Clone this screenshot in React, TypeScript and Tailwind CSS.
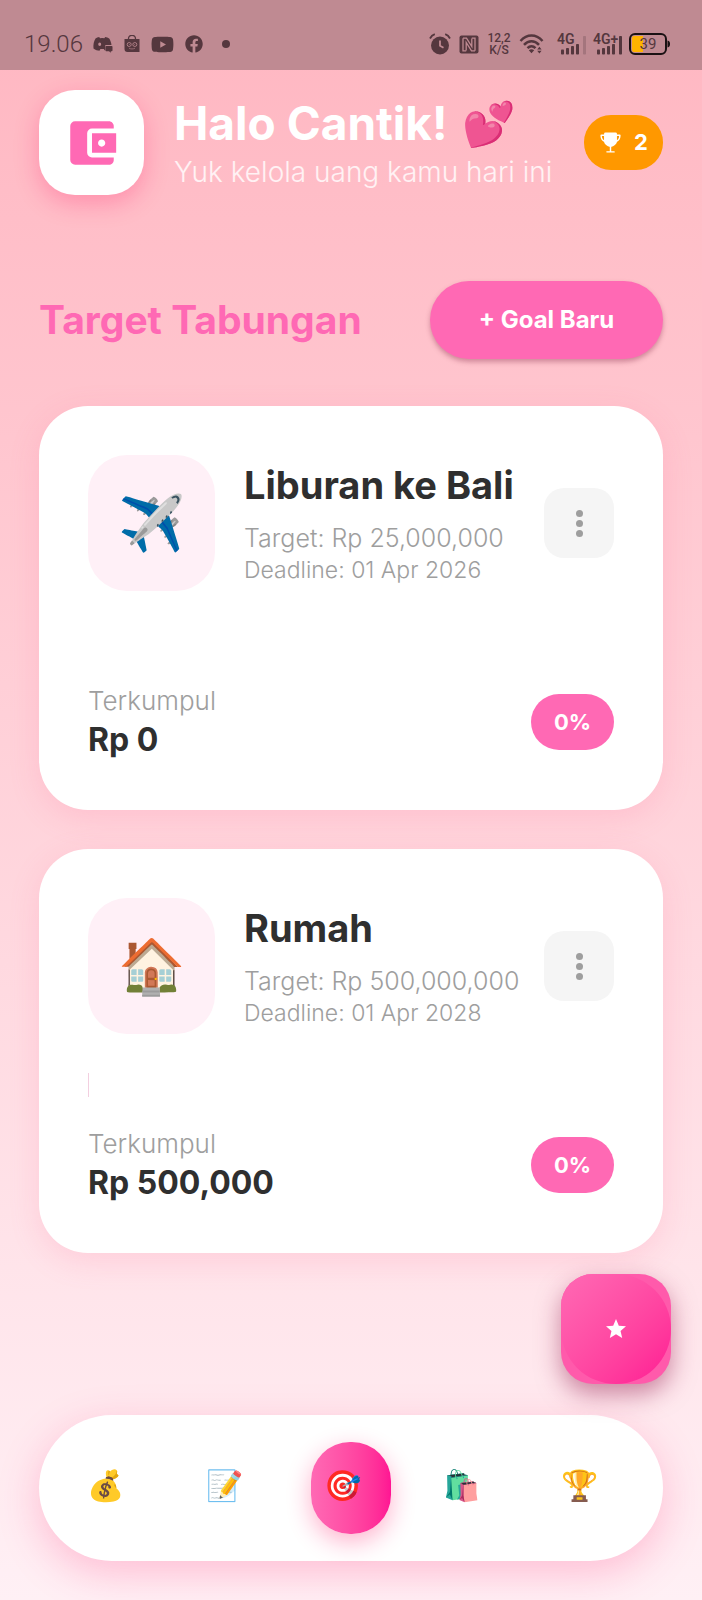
import { MdAccountBalanceWallet, MdStar } from "react-icons/md";
import { IoTrophy } from "react-icons/io5";
import { FaFacebook, FaYoutube } from "react-icons/fa";

type Goal = {
  emoji: string;
  name: string;
  target: string;
  deadline: string;
  saved: string;
  percent: string;
  started: boolean;
};

const goals: Goal[] = [
  {
    emoji: "✈️",
    name: "Liburan ke Bali",
    target: "Rp 25,000,000",
    deadline: "01 Apr 2026",
    saved: "Rp 0",
    percent: "0%",
    started: false,
  },
  {
    emoji: "🏠",
    name: "Rumah",
    target: "Rp 500,000,000",
    deadline: "01 Apr 2028",
    saved: "Rp 500,000",
    percent: "0%",
    started: true,
  },
];

const tabs = [
  { emoji: "💰", label: "Keuangan", active: false },
  { emoji: "📝", label: "Catatan", active: false },
  { emoji: "🎯", label: "Target", active: true },
  { emoji: "🛍️", label: "Belanja", active: false },
  { emoji: "🏆", label: "Pencapaian", active: false },
];

function ChatIcon() {
  return (
    <svg viewBox="0 0 20 17" className="h-[17px] w-5" fill="currentColor" aria-hidden="true">
      <path
        fillRule="evenodd"
        d="M6.2 1 7 2.2a13 13 0 0 1 4.4 0L12.2 1c1.500.2 2.800.7 4 1.500 1.300 2 2 4.200 2.300 6.500h-6.200v5.200h-.8l-.6-1.200c-1.100.1-2.400.1-3.500 0l-.9 1.800C4.500 14.600 2.500 14 .5 12.500.1 8.700.8 5.300 2.500 2.500 3.600 1.700 4.800 1.200 6.200 1Zm.5 5.600a1.500 1.700 0 1 0 0 3.400 1.500 1.700 0 0 0 0-3.400Z"
      />
      <path d="M13.500 10h5c.6 0 1 .4 1 1v3.200c0 .6-.4 1-1 1h-.7v1.500l-1.800-1.500h-2.500c-.6 0-1-.4-1-1V11c0-.6.4-1 1-1Z" />
    </svg>
  );
}

function ShopIcon() {
  return (
    <svg viewBox="0 0 16 18" className="h-[18px] w-4" fill="none" aria-hidden="true">
      <path d="M4.500 5V3.800a3.500 3.500 0 0 1 7 0V5" stroke="currentColor" strokeWidth="1.300" />
      <path d="M.5 4h15v13H3.500a3 3 0 0 1-3-3V4Z" fill="currentColor" />
      <circle cx="5.200" cy="9.500" r="2" stroke="#bf8a92" strokeWidth=".8" />
      <circle cx="10.800" cy="9.500" r="2" stroke="#bf8a92" strokeWidth=".8" />
      <path d="M5 13.200c2 1 4 1 6 0M5.200 9.500h.8M10 9.500h.8" stroke="#bf8a92" strokeWidth=".6" />
    </svg>
  );
}

function AlarmIcon() {
  return (
    <svg viewBox="0 0 22 22" className="size-[22px]" fill="none" aria-hidden="true">
      <circle cx="11" cy="12.500" r="9" fill="currentColor" />
      <path d="M1 5.500C2 3.500 3.500 2 5.800 1.200M21 5.500c-1-2-2.500-3.500-4.800-4.300" stroke="currentColor" strokeWidth="1.800" />
      <path d="M11 7.500v5.200l3.500 2" stroke="#bf8a92" strokeWidth="1.800" />
    </svg>
  );
}

function NfcIcon() {
  return (
    <svg viewBox="0 0 20 19" className="h-[19px] w-5" fill="none" aria-hidden="true">
      <rect x=".5" y=".5" width="19" height="18" rx="2" fill="currentColor" />
      <path d="M4 3.200h3.500l5.300 8.300V3.500M16 15.800h-3.500L7.200 7.500v8" stroke="#bf8a92" strokeWidth="1.300" />
      <path d="M4 3.200v12.600h3.200M16 15.800V3.200h-3.200" stroke="#bf8a92" strokeWidth="1.300" />
    </svg>
  );
}

function WifiIcon() {
  return (
    <svg viewBox="0 0 26 20" className="h-5 w-[26px]" fill="none" aria-hidden="true">
      <path d="M1.500 7C8-.2 17-.2 23.500 7M5 10.800c4.500-4.800 10.500-4.800 15 0M8.500 14.200c2.500-2.600 5.500-2.600 8 0" stroke="currentColor" strokeWidth="2.500" />
      <path d="m9.800 16.200 2.700 3 2.700-3c-1.700-1.200-3.700-1.200-5.400 0ZM18.200 15.500l2.200-2.700 2.200 2.700h-4.400ZM18.200 16.800l2.200 2.700 2.200-2.700h-4.400Z" fill="currentColor" />
    </svg>
  );
}

function SignalIcon({ label, full }: { label: string; full: boolean }) {
  return (
    <div className="grid h-[26px] w-[31px] grid-cols-1 grid-rows-1">
      <span className="col-start-1 row-start-1 text-[14px] leading-4 font-semibold">{label}</span>
      <svg viewBox="0 0 31 26" className="col-start-1 row-start-1 h-[26px] w-[31px]" fill="currentColor" aria-hidden="true">
        <rect x="4" y="18.500" width="3" height="5" rx=".8" />
        <rect x="9" y="17" width="3" height="6.500" rx=".8" />
        <rect x="14" y="15" width="3" height="8.500" rx=".8" />
        <rect x="19" y="13" width="3" height="10.500" rx=".8" />
        <rect x="26" y="5" width="3" height="18.500" rx=".8" opacity={full ? 1 : 0.25} />
      </svg>
    </div>
  );
}

function BatteryIcon() {
  return (
    <svg viewBox="0 0 42 22" className="h-[22px] w-[42px]" aria-hidden="true">
      <rect x="1" y="1" width="36" height="20" rx="5" fill="none" stroke="#1a1113" strokeWidth="2" />
      <path d="M5 3h9v16H5a2 2 0 0 1-2-2V5a2 2 0 0 1 2-2Z" fill="#ffb300" />
      <path d="M38.500 7.500c2 .5 2.500 1.500 2.500 3.500s-.5 3-2.500 3.500Z" fill="#1a1113" />
      <text x="19" y="16" textAnchor="middle" className="font-['Roboto'] text-[15px]" fill="#55373e">
        39
      </text>
    </svg>
  );
}

function StatusBar() {
  return (
    <div className="flex h-[70px] items-end justify-between bg-[#bf8a92] pr-[31px] pb-[15px] pl-6 text-[#55373e]">
      <div className="flex h-[22px] items-center font-['Roboto',sans-serif]">
        <span className="text-2xl font-light">19.06</span>
        <div className="ml-[10px] flex items-center gap-[11px]">
          <ChatIcon />
          <ShopIcon />
          <FaYoutube className="size-[23px]" />
          <FaFacebook className="size-[18px]" />
          <span className="ml-2 size-2 rounded-full bg-current" />
        </div>
      </div>
      <div className="flex h-[22px] items-center gap-2 font-['Roboto',sans-serif]">
        <AlarmIcon />
        <NfcIcon />
        <div className="w-6 text-center text-xs leading-3 font-medium">
          12,2
          <br />
          K/S
        </div>
        <WifiIcon />
        <div className="ml-1 flex items-center gap-[5px]">
          <SignalIcon label="4G" full={false} />
          <SignalIcon label="4G+" full />
          <BatteryIcon />
        </div>
      </div>
    </div>
  );
}

function Header() {
  return (
    <header className="flex items-center">
      <div className="grid size-[105px] shrink-0 place-items-center rounded-[36px] bg-white text-[#ff69b4] shadow-[0_8px_24px_rgba(255,20,100,0.28)]">
        <MdAccountBalanceWallet className="size-[58px]" />
      </div>
      <div className="ml-[30px] flex-1 pt-2 whitespace-nowrap">
        <h1 className="flex items-center gap-[14px] text-[46px] leading-[51px] font-bold text-white">
          Halo Cantik! <span className="text-[43px]">💕</span>
        </h1>
        <p className="text-[28px] leading-[46px] font-light text-white/80">Yuk kelola uang kamu hari ini</p>
      </div>
      <div className="flex h-[55px] w-[79px] shrink-0 items-center justify-center gap-3 rounded-[27px] bg-[#ff9800] text-[22px] font-bold text-white">
        <IoTrophy className="size-[23px]" />2
      </div>
    </header>
  );
}

function GoalCard({ goal }: { goal: Goal }) {
  return (
    <article className="rounded-[49px] bg-white p-[49px] shadow-[0_8px_30px_rgba(255,105,150,0.18)]">
      <div className="flex items-center">
        <div className="grid h-[136px] w-[127px] shrink-0 place-items-center rounded-[39px] bg-[#fff0f7] text-[54px] leading-none">
          {goal.emoji}
        </div>
        <div className="ml-[29px] min-w-0 flex-1 whitespace-nowrap text-[#9e9e9e]">
          <h3 className="text-[38px] leading-[50px] font-bold text-[#2f2f2f]">{goal.name}</h3>
          <p className="mt-3 text-[25px] leading-8 font-light">Target: {goal.target}</p>
          <p className="text-[23px] leading-8 font-light">Deadline: {goal.deadline}</p>
        </div>
        <button
          type="button"
          aria-label={`Opsi ${goal.name}`}
          className="flex size-[70px] shrink-0 flex-col items-center justify-center gap-[3px] rounded-[20px] bg-[#f5f5f5]"
        >
          <span className="size-[7px] rounded-full bg-[#9e9e9e]" />
          <span className="size-[7px] rounded-full bg-[#9e9e9e]" />
          <span className="size-[7px] rounded-full bg-[#9e9e9e]" />
        </button>
      </div>
      <div className="mt-[39px] h-6">{goal.started && <div className="h-full w-px bg-[#f3cfe0]" />}</div>
      <div className="mt-[29px] flex items-center justify-between">
        <div>
          <p className="text-[26px] leading-9 font-light text-[#9e9e9e]">Terkumpul</p>
          <p className="text-[32px] leading-[42px] font-bold text-[#2f2f2f]">{goal.saved}</p>
        </div>
        <span className="grid h-14 w-[83px] place-items-center rounded-[28px] bg-[#ff69b4] text-[22px] font-bold text-white">
          {goal.percent}
        </span>
      </div>
    </article>
  );
}

export default function App() {
  return (
    <div className="relative flex min-h-screen flex-col bg-linear-to-b from-[#ffb6c1] to-[#fff0f5] font-['Inter',sans-serif]">
      <StatusBar />
      <main className="px-[39px] pt-5">
        <Header />
        <div className="mt-[86px] flex items-center justify-between">
          <h2 className="text-[39px] leading-[48px] font-bold text-[#ff69b4]">Target Tabungan</h2>
          <button
            type="button"
            className="h-[78px] w-[233px] rounded-[39px] bg-[#ff69b4] text-2xl font-bold text-white shadow-[0_3px_5px_rgba(120,30,60,0.35)]"
          >
            + Goal Baru
          </button>
        </div>
        <div className="mt-[47px] flex flex-col gap-[39px]">
          {goals.map((goal) => (
            <GoalCard key={goal.name} goal={goal} />
          ))}
        </div>
      </main>

      <div className="mt-auto px-[39px] pt-[161px] pb-[39px]">
        <nav className="flex h-[146px] items-center justify-between rounded-[73px] bg-white px-[35px] shadow-[0_12px_40px_rgba(255,60,130,0.28)]">
          {tabs.map((tab) => (
            <button
              key={tab.label}
              type="button"
              aria-label={tab.label}
              className={
                tab.active
                  ? "flex h-[92px] w-20 items-center rounded-[39px] bg-linear-to-r from-[#ff69b4] to-[#ff1493] pb-[6px] pl-[13px] text-[30px] leading-none shadow-[0_8px_24px_rgba(255,20,100,0.32)]"
                  : "flex h-[92px] w-20 items-center pb-[6px] pl-[13px] text-[30px] leading-none"
              }
            >
              {tab.emoji}
            </button>
          ))}
        </nav>
      </div>

      <button
        type="button"
        aria-label="Favorit"
        className="absolute right-[31px] bottom-[216px] size-[110px] rounded-[32px] bg-[#ff5aab] shadow-[0_10px_24px_rgba(150,30,80,0.5)]"
      >
        <span className="grid size-full place-items-center rounded-[32px_55px_55px_55px] bg-linear-to-br from-[#ff69b4] to-[#ff1493] text-white">
          <MdStar className="size-6" />
        </span>
      </button>
    </div>
  );
}
